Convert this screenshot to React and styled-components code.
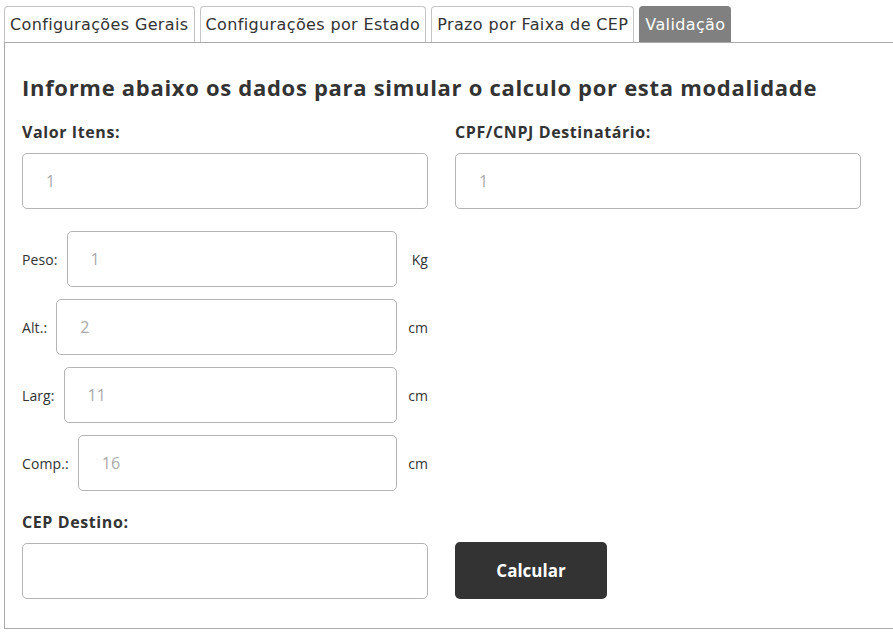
import React from 'react';
import styled, { createGlobalStyle } from 'styled-components';

const Global = createGlobalStyle`
	html, body {
		margin: 0;
		padding: 0;
		background: #fff;
		overflow: hidden;
	}
	body {
		font-family: 'Open Sans', 'Liberation Sans', sans-serif;
		color: #333;
	}
	* {
		box-sizing: border-box;
	}
`;

const Page = styled.div`
	padding: 6px 0 0 4px;
`;

const TabBar = styled.div`
	display: flex;
	gap: 5px;
`;

const Tab = styled.div`
	height: 36px;
	padding: 0 5px;
	display: flex;
	align-items: center;
	font-family: 'DejaVu Sans', Verdana, sans-serif;
	font-size: 16px;
	letter-spacing: 0.37px;
	border: 1px solid ${(p) => (p.active ? '#808080' : '#c4c4c4')};
	border-bottom: none;
	border-radius: 4px 4px 0 0;
	background: ${(p) => (p.active ? '#808080' : '#fff')};
	color: ${(p) => (p.active ? '#fff' : '#333')};
`;

const Panel = styled.div`
	width: 910px;
	border: 1px solid #aaa;
	padding: 29px 0 29px 17px;
`;

const Heading = styled.h2`
	margin: 0 0 20px;
	font-size: 22px;
	line-height: 30px;
	font-weight: 700;
	color: #333;
	letter-spacing: 0.7px;
`;

const Grid = styled.div`
	display: grid;
	grid-template-columns: 406px 406px;
	column-gap: 27px;
	align-items: end;
`;

const Column = styled.div`
	display: flex;
	flex-direction: column;
`;

const Label = styled.label`
	font-size: 16px;
	font-weight: 700;
	color: #333;
	line-height: 20px;
	letter-spacing: 0.6px;
	margin-bottom: 11px;
`;

const Input = styled.input`
	height: 56px;
	width: 100%;
	border: 1px solid #b4b4b4;
	border-radius: 5px;
	padding: 0 23px;
	font-family: 'Open Sans', sans-serif;
	font-size: 16px;
	color: #333;
	background: #fff;
	outline: none;

	&::placeholder {
		color: #aaa;
	}
`;

const Measures = styled.div`
	display: flex;
	flex-direction: column;
	gap: 12px;
	margin: 22px 0 21px;
`;

const MeasureRow = styled.div`
	display: flex;
	align-items: center;
	gap: 9px;
`;

const Small = styled.span`
	font-size: 14px;
	letter-spacing: 0.1px;
	color: #333;
	white-space: nowrap;
`;

const Unit = styled(Small)`
	min-width: 22px;
	text-align: right;
`;

const Button = styled.button`
	height: 57px;
	width: 152px;
	border: none;
	border-radius: 5px;
	background: #333;
	color: #fff;
	font-family: 'Open Sans', sans-serif;
	font-weight: 700;
	font-size: 17px;
	cursor: pointer;
`;

const tabs = [
	'Configurações Gerais',
	'Configurações por Estado',
	'Prazo por Faixa de CEP',
	'Validação',
];

const measures = [
	{ label: 'Peso:', value: '1', unit: 'Kg' },
	{ label: 'Alt.:', value: '2', unit: 'cm' },
	{ label: 'Larg:', value: '11', unit: 'cm' },
	{ label: 'Comp.:', value: '16', unit: 'cm' },
];

export default function App() {
	return (
		<Page>
			<Global />
			<TabBar>
				{tabs.map((t, i) => (
					<Tab key={t} active={i === tabs.length - 1}>
						{t}
					</Tab>
				))}
			</TabBar>
			<Panel>
				<Heading>Informe abaixo os dados para simular o calculo por esta modalidade</Heading>
				<Grid>
					<Column>
						<Label>Valor Itens:</Label>
						<Input placeholder="1" />
					</Column>
					<Column>
						<Label>CPF/CNPJ Destinatário:</Label>
						<Input placeholder="1" />
					</Column>
				</Grid>
				<Grid>
					<Measures>
						{measures.map((m) => (
							<MeasureRow key={m.label}>
								<Small>{m.label}</Small>
								<Input placeholder={m.value} />
								<Unit>{m.unit}</Unit>
							</MeasureRow>
						))}
					</Measures>
				</Grid>
				<Grid>
					<Column>
						<Label>CEP Destino:</Label>
						<Input />
					</Column>
					<Column>
						<Button>Calcular</Button>
					</Column>
				</Grid>
			</Panel>
		</Page>
	);
}
